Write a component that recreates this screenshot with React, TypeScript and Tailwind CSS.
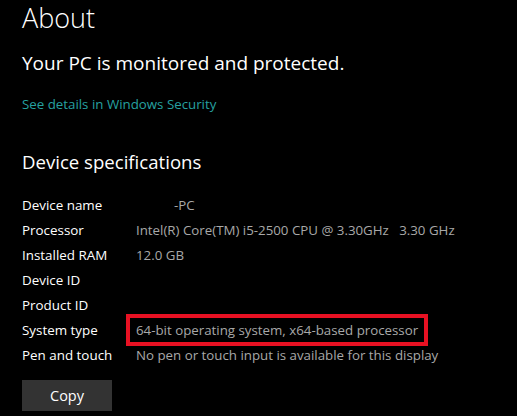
import React from "react";

const rows: { label: string; value: string; boxed?: boolean }[] = [
  { label: "Device name", value: "\u00a0\u00a0\u00a0\u00a0\u00a0\u00a0\u00a0\u00a0\u00a0\u00a0\u00a0-PC" },
  { label: "Processor", value: "Intel(R) Core(TM) i5-2500 CPU @ 3.30GHz\u00a0\u00a0 3.30 GHz" },
  { label: "Installed RAM", value: "12.0 GB" },
  { label: "Device ID", value: "" },
  { label: "Product ID", value: "" },
  { label: "System type", value: "64-bit operating system, x64-based processor", boxed: true },
  { label: "Pen and touch", value: "No pen or touch input is available for this display" },
];

export default function App() {
  return (
    <div
      className="w-[517px] h-[416px] bg-black text-white overflow-hidden pl-[22px]"
      style={{ fontFamily: '"Open Sans", "Noto Sans", sans-serif' }}
    >
      <h1 className="text-[27px] leading-[36px] font-light">About</h1>
      <p className="mt-[13px] text-[19px] leading-[28px]">Your PC is monitored and protected.</p>
      <p className="mt-[17px] text-[13.3px] leading-[20px] text-[#26a0a0]">See details in Windows Security</p>
      <h2 className="mt-[34px] text-[18.6px] leading-[28px]">Device specifications</h2>
      <div className="mt-[17px] flex flex-col text-[13.4px] leading-[25px]">
        {rows.map((r) => (
          <div key={r.label} className="flex h-[25px]">
            <div className="w-[114px] shrink-0">{r.label}</div>
            <div className="relative text-[#a8a8a8] text-[13.3px] whitespace-nowrap">
              {r.value}
              {r.boxed && (
                <div className="absolute left-[-10px] top-[-4px] w-[302px] h-[32px] border-[4px] border-[#e81123]" />
              )}
            </div>
          </div>
        ))}
      </div>
      <button className="mt-[12px] w-[90px] h-[31px] bg-[#333333] text-[14.5px] text-white">Copy</button>
    </div>
  );
}
